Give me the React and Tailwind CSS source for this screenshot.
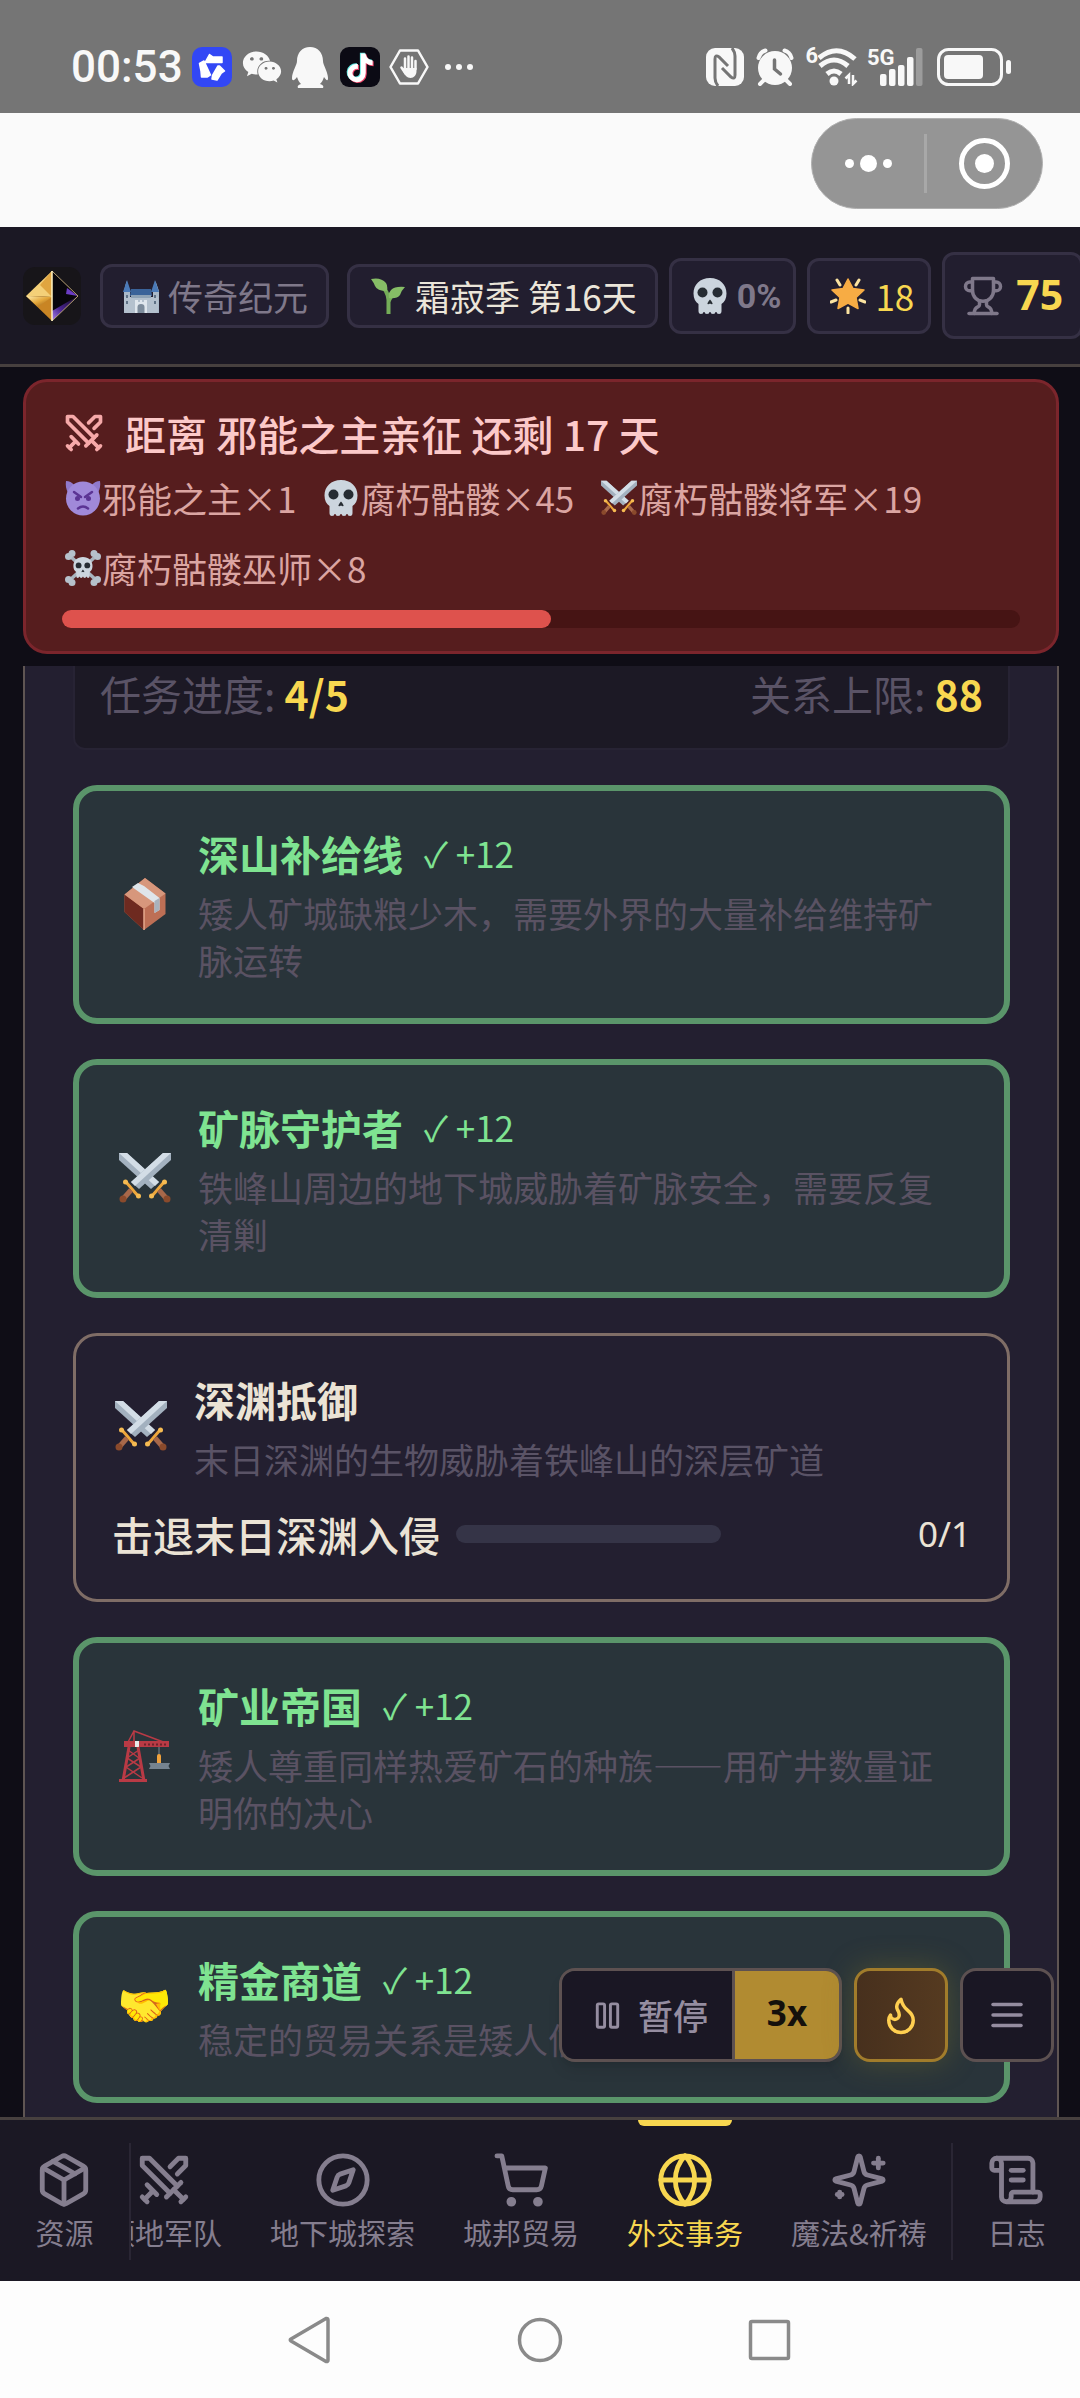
import React from "react";
import { FaWeixin } from "react-icons/fa6";

const PATHS = {
  swords: ["M14.5 17.5 3 6V3h3l11.5 11.5", "M13 19l6-6", "M16 16l4 4", "M19 21l2-2", "M14.5 6.5 18 3h3v3l-3.5 3.5", "M5 14l4 4", "M7 17l-3 3", "M3 19l2 2"],
  box: ["M11 21.73a2 2 0 0 0 2 0l7-4A2 2 0 0 0 21 16V8a2 2 0 0 0-1-1.73l-7-4a2 2 0 0 0-2 0l-7 4A2 2 0 0 0 3 8v8a2 2 0 0 0 1 1.73z", "M12 22V12", "M3.29 7 12 12l8.71-5", "M7.5 4.27l9 5.15"],
  compass: ["M12 2a10 10 0 1 0 0 20a10 10 0 1 0 0-20", "M16.24 7.76l-1.804 5.411a2 2 0 0 1-1.265 1.265L7.76 16.24l1.804-5.411a2 2 0 0 1 1.265-1.265z"],
  cart: ["M8 20a1 1 0 1 0 0 2a1 1 0 1 0 0-2", "M19 20a1 1 0 1 0 0 2a1 1 0 1 0 0-2", "M2.05 2.05h2l2.66 12.42a2 2 0 0 0 2 1.58h9.78a2 2 0 0 0 1.95-1.57l1.65-7.43H5.12"],
  globe: ["M12 2a10 10 0 1 0 0 20a10 10 0 1 0 0-20", "M12 2a14.5 14.5 0 0 0 0 20 14.5 14.5 0 0 0 0-20", "M2 12h20"],
  sparkles: ["M9.937 15.5A2 2 0 0 0 8.5 14.063l-6.135-1.582a.5.5 0 0 1 0-.962L8.5 9.936A2 2 0 0 0 9.937 8.5l1.582-6.135a.5.5 0 0 1 .963 0L14.063 8.5A2 2 0 0 0 15.5 9.937l6.135 1.581a.5.5 0 0 1 0 .964L15.5 14.063a2 2 0 0 0-1.437 1.437l-1.582 6.135a.5.5 0 0 1-.963 0z", "M20 3v4", "M22 5h-4", "M4 17v2", "M5 18H3"],
  scroll: ["M15 12h-5", "M15 8h-5", "M19 17V5a2 2 0 0 0-2-2H4", "M8 21h12a2 2 0 0 0 2-2v-1a1 1 0 0 0-1-1H11a1 1 0 0 0-1 1v1a2 2 0 1 1-4 0V5a2 2 0 1 0-4 0v2a1 1 0 0 0 1 1h3"],
  trophy: ["M6 9H4.5a2.5 2.5 0 0 1 0-5H6", "M18 9h1.5a2.5 2.5 0 0 0 0-5H18", "M4 22h16", "M10 14.66V17c0 .55-.47.98-.97 1.21C7.85 18.75 7 20.24 7 22", "M14 14.66V17c0 .55.47.98.97 1.21C16.15 18.75 17 20.24 17 22", "M18 2H6v7a6 6 0 0 0 12 0V2Z"],
  flame: ["M8.5 14.5A2.5 2.5 0 0 0 11 12c0-1.38-.5-2-1-3-1.072-2.143-.224-4.054 2-6 .5 2.5 2 4.9 4 6.5 2 1.6 3 3.5 3 5.5a7 7 0 1 1-14 0c0-1.153.433-2.294 1-3a2.5 2.5 0 0 0 2.5 2.5z"],
  menu: ["M4 6h16", "M4 12h16", "M4 18h16"],
  pause: ["M6 4h3a1 1 0 0 1 1 1v14a1 1 0 0 1-1 1H6a1 1 0 0 1-1-1V5a1 1 0 0 1 1-1z", "M15 4h3a1 1 0 0 1 1 1v14a1 1 0 0 1-1 1h-3a1 1 0 0 1-1-1V5a1 1 0 0 1 1-1z"],
};

function Icon({ name, className }) {
  return (
    <svg viewBox="0 0 24 24" fill="none" stroke="currentColor" strokeWidth="2" strokeLinecap="round" strokeLinejoin="round" className={`shrink-0 ${className}`} aria-hidden="true">
      {PATHS[name].map((d) => (
        <path key={d} d={d} />
      ))}
    </svg>
  );
}

function SkullShape() {
  return (
    <>
      <path d="M18 0C8 0 1.500 6.500 1.500 15.500c0 5 2 8.500 5 10.500V33q0 3 2.500 3t2.500-2h1q0 2 2.500 2t2.500-2h1q0 2 2.500 2t2.500-2h1q0 2 2.500 2t2.500-3v-7c3-2 5-5.500 5-10.500C34.500 6.500 28 0 18 0z" fill="#ccd5de" />
      <circle cx="10.500" cy="14.500" r="5" fill="#262c33" />
      <circle cx="25.500" cy="14.500" r="5" fill="#262c33" />
      <path d="M18 21.500q-3 3.500-2.500 4.500 1 .5 2.500-.5 1.500 1 2.500.5.500-1-2.500-4.500z" fill="#262c33" />
    </>
  );
}

function BladeShape() {
  return (
    <>
      <path d="M0 1h8l32 29-8 7L0 8z" fill="#a3b1bf" />
      <path d="M0 1h8l32 29-4 4z" fill="#d3dde6" />
      <path d="M33 44l12-14" stroke="#eda63c" strokeWidth="3" strokeLinecap="round" />
      <path d="M40 38l7 8" stroke="#a8684a" strokeWidth="5" />
      <circle cx="48" cy="47" r="3.500" fill="#8a4a2c" />
      <circle cx="32.500" cy="44" r="2.500" fill="#f6bb52" />
      <circle cx="45.500" cy="30" r="2.500" fill="#f6bb52" />
    </>
  );
}

const EMOJI = {
  swords: (
    <svg viewBox="0 0 52 52" aria-hidden="true">
      <BladeShape />
      <g transform="matrix(-1 0 0 1 52 0)"><BladeShape /></g>
    </svg>
  ),
  skull: <svg viewBox="0 0 36 36" aria-hidden="true"><SkullShape /></svg>,
  crossbones: (
    <svg viewBox="0 0 36 36" aria-hidden="true">
      <path d="M5 6l26 24M31 6L5 30" stroke="#a9b4be" strokeWidth="3.500" />
      <g fill="#b6c1cb">
        <circle cx="3.500" cy="6.500" r="3.500" /><circle cx="7" cy="3.500" r="3.500" />
        <circle cx="32.500" cy="6.500" r="3.500" /><circle cx="29" cy="3.500" r="3.500" />
        <circle cx="3.500" cy="29.500" r="3.500" /><circle cx="7" cy="32.500" r="3.500" />
        <circle cx="32.500" cy="29.500" r="3.500" /><circle cx="29" cy="32.500" r="3.500" />
      </g>
      <g transform="translate(7.500 7) scale(.58)"><SkullShape /></g>
    </svg>
  ),
  imp: (
    <svg viewBox="0 0 36 36" aria-hidden="true">
      <path d="M1 1q5 0 8 4l-6 8Q0 7 1 1zM35 1q-5 0-8 4l6 8q3-6 2-12z" fill="#9079cb" />
      <circle cx="18" cy="18.500" r="17" fill="#a089d9" />
      <path d="M9 12l7 5M27 12l-7 5" stroke="#5b3494" strokeWidth="2.500" strokeLinecap="round" />
      <circle cx="12.500" cy="18.500" r="2.500" fill="#5b3494" />
      <circle cx="23.500" cy="18.500" r="2.500" fill="#5b3494" />
      <path d="M13 28.500q5-4 10 0" fill="none" stroke="#5b3494" strokeWidth="2.500" strokeLinecap="round" />
    </svg>
  ),
  castle: (
    <svg viewBox="0 0 36 36" aria-hidden="true">
      <path d="M3.500 3L7 13v22H1V13zM32.500 3l3.500 10v22h-6V13z" fill="#a9b9c9" />
      <path d="M1 33V19h34v14q0 2-2 2H3q-2 0-2-2z" fill="#b4c1ce" />
      <path d="M4 2l4 12H0zM32 2l4 12h-8z" fill="#4a7ab8" />
      <path d="M8 11h20l1 7H7z" fill="#3a6399" />
      <path d="M8 17h20v3H8z" fill="#8fa3b6" />
      <path d="M12 22h3v2h2v-2h2v2h2v-2h3v13H12z" fill="#dfe6ed" />
      <path d="M14.500 35v-6q0-3 3.500-3t3.500 3v6z" fill="#7d8c9c" />
      <path d="M3 17h2v3H3zM31 17h2v3h-2zM3 23h2v3H3zM31 23h2v3h-2z" fill="#5f7286" />
    </svg>
  ),
  sprout: (
    <svg viewBox="0 0 36 36" aria-hidden="true">
      <path d="M18.500 36V22Q18 13 10 6M18.500 24Q20 18 27 14" fill="none" stroke="#74ad58" strokeWidth="4" />
      <path d="M1 1q10-2 15 4 2 3 1 8-10 0-12-5Q4 5 1 1zM35 9q-10-1-14 3-3 3-2 8 8 1 11-3 1-4 5-8z" fill="#86bd66" />
    </svg>
  ),
  star: (
    <svg viewBox="0 0 36 36" aria-hidden="true">
      <path d="M7 2l3 5M29 2l-3 5M1 24l5-2M35 24l-5-2M18 30v5" stroke="#fbe3a0" strokeWidth="3" strokeLinecap="round" />
      <path d="M18 1l5 9.500 11 1.500-8 7.500 2 11-10-5.500L8 30.500l2-11L2 12l11-1.500z" fill="#f7ac44" stroke="#f7ac44" strokeWidth="1.500" strokeLinejoin="round" />
    </svg>
  ),
  box: (
    <svg viewBox="0 0 52 52" aria-hidden="true">
      <path d="M26 0l20.500 15.500V36L25 52 5.500 34V16.500z" fill="#bd6f55" />
      <path d="M5.500 16.500L25 31v21L5.500 34z" fill="#6e2a20" />
      <path d="M26 0l20.500 15.500L25 31 5.500 16.500z" fill="#d7977c" />
      <path d="M19 5l6 3 15.500 12v12l-5 3V25L13 9z" fill="#dfe5ea" />
      <path d="M35.500 23l5-3v12l-5 3z" fill="#a9b2bd" />
      <path d="M25 31v21" stroke="#e6a88c" strokeWidth="1.500" />
    </svg>
  ),
  crane: (
    <svg viewBox="0 0 52 52" aria-hidden="true" fill="none" stroke="#b93a45">
      <path d="M8 14L15 1l32 12M15 1v14" strokeWidth="1.500" />
      <path d="M5 14h45" strokeWidth="6" />
      <path d="M25 14.500h24" stroke="#6d222b" strokeWidth="2" strokeDasharray="2 2" />
      <path d="M16 11h4v6h-4z" fill="#e8e8ea" stroke="none" />
      <path d="M10 17L4 51M19 17l6 34" strokeWidth="3" />
      <path d="M9 20l11 8M20 20L8 28l14 9M21 28L7 37l16 11M22 37L5 48" strokeWidth="1.500" />
      <path d="M0 50.500h28" strokeWidth="3" />
      <path d="M40 17v10" stroke="#7f8a94" strokeWidth="1" />
      <path d="M40 26v7" stroke="#f0a23c" strokeWidth="4" strokeLinecap="round" />
      <path d="M30 33h21l-1.500 3 1.500 3H30l1.500-3z" fill="#75838f" stroke="none" />
    </svg>
  ),
};

function SmallEmoji({ name }) {
  return <span className="w-[36px] shrink-0 self-center">{EMOJI[name]}</span>;
}

function CardEmoji({ name }) {
  return (
    <span className="flex w-[57px] shrink-0 justify-center">
      {name === "handshake" ? (
        <span className="font-['Noto_Color_Emoji'] text-[44px] leading-[58px] brightness-115" aria-hidden="true">🤝</span>
      ) : (
        <span className="w-[52px]">{EMOJI[name]}</span>
      )}
    </span>
  );
}

const NOTE = "M448,209.91a210.06,210.06,0,0,1-122.77-39.25V349.38A162.55,162.55,0,1,1,185,188.31V278.2a74.62,74.62,0,1,0,52.23,71.18V0l88,0a121.18,121.18,0,0,0,1.86,22.17h0A122.18,122.18,0,0,0,381,102.39a121.43,121.43,0,0,0,67,20.14Z";

function StatusBar() {
  return (
    <div className="flex h-[113px] shrink-0 items-end justify-between bg-[#757575] pr-[69px] pb-[24px] pl-[71px] text-[#f8f8f8]">
      <div className="flex h-[44px] items-center">
        <span className="w-[121px] font-['Roboto'] text-[44px] leading-[44px] font-medium">00:53</span>
        <svg viewBox="0 0 40 40" className="mr-[10px] size-[40px]">
          <rect width="40" height="40" rx="10" fill="#3247f5" />
          <path d="M13 15.500L17.500 7.500 21 10h9v5.500zM7.500 16.500L12 14l6.500 14-3 2h-6l-.5-6zM27.500 19l5 5-3.500 2.500-4 6.500-5-1 .5-3.500L26 19z" fill="#fff" stroke="#fff" strokeWidth="1.500" strokeLinejoin="round" />
        </svg>
        <FaWeixin className="mr-[10px] size-[40px]" />
        <svg viewBox="0 0 36 41" className="mr-[12px] h-[41px] w-[36px]" fill="currentColor">
          <path d="M18 0C10 0 5 6 5 14c0 4-5 11-5 17 0 4 3 2 5-1 1 3 2 5 4 7-3 1-4 2-3 4h25c1-2 0-3-3-4 2-2 3-4 4-7 2 3 4 5 4 1 0-6-5-13-5-17 0-8-5-14-13-14z" />
        </svg>
        <svg viewBox="0 0 40 40" className="mr-[9px] size-[40px]">
          <rect width="40" height="40" rx="9" fill="#0b0a14" />
          <g transform="translate(7.5 6.5) scale(.056)">
            <path d={NOTE} fill="#5fe9e4" transform="translate(-16 -14)" />
            <path d={NOTE} fill="#f3476c" transform="translate(18 16)" />
            <path d={NOTE} fill="#fff" />
          </g>
        </svg>
        <svg viewBox="0 0 40 36" className="mr-[16px] h-[36px] w-[40px]" fill="none" stroke="currentColor" strokeLinejoin="round" strokeLinecap="round">
          <path d="M11 1.500h18L38.500 18 29 34.500H11L1.500 18z" strokeWidth="2.500" />
          <path d="M16 20V9.500M19.500 19V7.500M23 19V8.500M26.500 20V12M12.500 18.500l4 6" strokeWidth="2.500" />
          <path d="M15 19h12.500v3c0 4-2.500 7-6 7s-6-3-8-8z" fill="currentColor" stroke="none" />
        </svg>
        <svg viewBox="0 0 28 6" className="h-[6px] w-[28px]" fill="currentColor">
          <circle cx="3" cy="3" r="3" /><circle cx="14" cy="3" r="3" /><circle cx="25" cy="3" r="3" />
        </svg>
      </div>
      <div className="flex h-[44px] items-center">
        <svg viewBox="0 0 38 38" className="mr-[12px] size-[38px]">
          <rect width="38" height="38" rx="9" fill="currentColor" />
          <path d="M12 38Q9 34 9 30V11Q9 6 13 9L22 18M26 0Q29 4 29 8V27Q29 32 25 29L16 20" fill="none" stroke="#757575" strokeWidth="3" />
        </svg>
        <svg viewBox="0 0 38 38" className="mr-[11px] size-[38px]" fill="none" stroke="currentColor" strokeLinecap="round">
          <circle cx="19" cy="20" r="17" fill="currentColor" stroke="none" />
          <path d="M2.500 10Q4 4 9.500 2.500M35.500 10Q34 4 28.500 2.500M8 32l-4 4M30 32l4 4" strokeWidth="4" />
          <path d="M18.500 12v9l6 5" stroke="#757575" strokeWidth="3.500" />
        </svg>
        <span className="h-[42px] font-['Roboto'] text-[22px] leading-[20px] font-bold">6</span>
        <svg viewBox="0 0 40 38" className="mr-[9px] h-[38px] w-[40px]" fill="none" stroke="currentColor" strokeWidth="5">
          <path d="M1 10Q19-5 37 11M2 18Q16 6 30 18M9 26Q16 20 23 26" />
          <circle cx="16" cy="33" r="4.500" fill="currentColor" stroke="none" />
          <path d="M31 36V27l-3.500 3.500M35 27v9l3.500-3.500" strokeWidth="2.500" />
        </svg>
        <div className="relative mr-[14px] h-[38px] w-[56px]">
          <span className="absolute top-0 left-0 font-['Roboto'] text-[22px] leading-[20px] font-bold">5G</span>
          <svg viewBox="0 0 56 38" className="size-full" fill="currentColor">
            <rect x="13" y="26" width="6.500" height="12" rx="2" />
            <rect x="22" y="21" width="6.500" height="17" rx="2" />
            <rect x="31" y="17" width="6.500" height="21" rx="2" />
            <rect x="40" y="9" width="6.500" height="29" rx="2" />
            <rect x="49" y="0" width="6.500" height="38" rx="2" opacity=".3" />
          </svg>
        </div>
        <svg viewBox="0 0 74 38" className="h-[38px] w-[74px]">
          <rect x="1.500" y="1.500" width="63" height="35" rx="10" fill="none" stroke="currentColor" strokeWidth="3" />
          <rect x="7" y="7" width="39" height="24" rx="4" fill="currentColor" />
          <rect x="69" y="12" width="5" height="14" rx="2.500" fill="currentColor" />
        </svg>
      </div>
    </div>
  );
}

function MiniAppBar() {
  return (
    <div className="flex h-[114px] shrink-0 items-start justify-end bg-[#fafafa] pt-[5px] pr-[37px]">
      <div className="flex h-[91px] w-[232px] items-center rounded-full border border-[#b0b0b0] bg-[#959595]">
        <button aria-label="更多" className="flex h-full w-[112px] items-center justify-center gap-[6px]">
          <span className="size-[9px] rounded-full bg-white" />
          <span className="size-[17px] rounded-full bg-white" />
          <span className="size-[9px] rounded-full bg-white" />
        </button>
        <span className="h-[59px] w-[3px] bg-[#a8a8a8]" />
        <button aria-label="关闭" className="flex h-full flex-1 items-center justify-center">
          <span className="flex size-[51px] items-center justify-center rounded-full border-[5px] border-white">
            <span className="size-[19px] rounded-full bg-white" />
          </span>
        </button>
      </div>
    </div>
  );
}

function Header() {
  return (
    <header className="flex h-[140px] shrink-0 items-center overflow-hidden border-b-[3px] border-[#47403f] bg-[#1b1824] pl-[23px] text-[35px] leading-[58px] whitespace-nowrap">
      <svg viewBox="0 0 58 58" className="mr-[19px] size-[58px] shrink-0">
        <defs>
          <linearGradient id="gold" x1="0" y1="0" x2="1" y2="1"><stop offset="0" stopColor="#fff0b0" /><stop offset=".5" stopColor="#e3a63a" /><stop offset="1" stopColor="#8a4f10" /></linearGradient>
          <linearGradient id="violet" x1="0" y1="1" x2="1" y2="0"><stop offset="0" stopColor="#a984f0" /><stop offset=".4" stopColor="#4a2490" /><stop offset="1" stopColor="#0c0716" /></linearGradient>
        </defs>
        <rect width="58" height="58" rx="12" fill="#171519" />
        <path d="M29 4L3 29l26 1z" fill="#f4d078" />
        <path d="M29 4L17 18l12 12z" fill="#e0a540" />
        <path d="M3 29l26 1v24z" fill="#c98524" />
        <path d="M3 29l26 1-14 10z" fill="url(#gold)" />
        <path d="M29 4l26 25-26 25z" fill="#08060c" />
        <path d="M44 21l11 8-12-2z" fill="#6b3cc4" />
        <path d="M29 54V44l12-7 14-8z" fill="url(#violet)" />
        <path d="M29 4l26 25-26 25" fill="none" stroke="#b9a173" strokeWidth="1" />
        <path d="M29 4v50" stroke="#fff3c4" strokeWidth="1.500" />
      </svg>
      <div className="mr-[18px] flex shrink-0 gap-[9px] rounded-xl border-[3px] border-[#353044] bg-[#221e2f] pr-[18px] pl-[20px] text-[#7f788a]">
        <SmallEmoji name="castle" /><span>传奇纪元</span>
      </div>
      <div className="mr-[11px] flex shrink-0 gap-[9px] rounded-xl border-[3px] border-[#353044] bg-[#221e2f] pr-[18px] pl-[20px] text-[#ebe5d9]">
        <SmallEmoji name="sprout" /><span>霜寂季 第16天</span>
      </div>
      <div className="mr-[11px] flex shrink-0 gap-[9px] rounded-xl border-[3px] border-[#353044] bg-[#221e2f] py-[6px] pr-[12px] pl-[20px] text-[#7f788a]">
        <SmallEmoji name="skull" /><span className="font-['Roboto'] text-[34px] font-bold">0%</span>
      </div>
      <div className="mr-[11px] flex shrink-0 gap-[9px] rounded-xl border-[3px] border-[#353044] bg-[#221e2f] py-[6px] pr-[14px] pl-[20px] text-[#f8d750]">
        <SmallEmoji name="star" /><span>18</span>
      </div>
      <div className="flex h-[87px] shrink-0 items-center gap-[12px] rounded-xl border-[3px] border-[#353044] bg-[#221e2f] px-[17px]">
        <Icon name="trophy" className="size-[42px] text-[#7f788a]" />
        <span className="pb-[4px] font-['Noto_Sans'] text-[41px] font-bold text-[#f8d750]">75</span>
      </div>
    </header>
  );
}

const ENEMIES = [
  ["imp", "邪能之主×1"],
  ["skull", "腐朽骷髅×45"],
  ["swords", "腐朽骷髅将军×19"],
  ["crossbones", "腐朽骷髅巫师×8"],
];

function Alert() {
  return (
    <section className="mt-[12px] mr-[21px] mb-[12px] ml-[23px] shrink-0 rounded-3xl border-[3px] border-[#7b252c] bg-[#561d1e] px-[36px] pt-[22px] pb-[23px]">
      <h2 className="mb-[1px] flex items-center gap-[19px] text-[41px] leading-[58px] font-medium text-[#fcc9c9]">
        <Icon name="swords" className="size-[44px] text-[#f6a9a9]" />
        距离 邪能之主亲征 还剩 17 天
      </h2>
      <ul className="mb-[7px] flex flex-wrap gap-x-[24px] text-[35px] leading-[70px] text-[#dba5a2]">
        {ENEMIES.map(([e, t]) => (
          <li key={t} className="flex gap-[1px] pl-[3px]"><SmallEmoji name={e} /><span>{t}</span></li>
        ))}
      </ul>
      <div className="h-[18px] rounded-full bg-[#461414]" role="progressbar" aria-label="入侵倒计时" aria-valuenow="51" aria-valuemin="0" aria-valuemax="100">
        <div className="h-full w-[51%] rounded-full bg-[#de524d]" />
      </div>
    </section>
  );
}

function DoneCard({ emoji, title, text }) {
  return (
    <article className="flex items-center gap-[25px] rounded-3xl border-[6px] border-[#5a956a] bg-[#29343a] px-[37px] pt-[33px] pb-[35px]">
      <CardEmoji name={emoji} />
      <div className="flex flex-1 flex-col gap-[7px]">
        <h3 className="flex gap-[21px] text-[41px] leading-[58px] font-bold text-[#7fe391]">
          {title}
          <span className="text-[35px] font-normal">✓ +12</span>
        </h3>
        <p className="text-[35px] leading-[47px] text-[#5a5263]">{text}</p>
      </div>
    </article>
  );
}

function ActiveCard() {
  return (
    <article className="flex flex-col gap-[23px] rounded-3xl border-[3px] border-[#7f6d66] px-[36px] pt-[34px] pb-[36px]">
      <div className="flex items-center gap-[25px]">
        <CardEmoji name="swords" />
        <div className="flex flex-1 flex-col gap-[7px]">
          <h3 className="text-[41px] leading-[58px] font-bold text-[#ebe3d5]">深渊抵御</h3>
          <p className="text-[35px] leading-[47px] text-[#5a5366]">末日深渊的生物威胁着铁峰山的深层矿道</p>
        </div>
      </div>
      <div className="flex items-center gap-[16px] text-[41px] leading-[58px] font-medium text-[#ebe3d5]">
        击退末日深渊入侵
        <div className="h-[18px] flex-1 rounded-full bg-[#353447]" role="progressbar" aria-label="击退末日深渊入侵" aria-valuenow="0" aria-valuemin="0" aria-valuemax="1" />
        <span className="w-[234px] text-right font-['Noto_Sans'] text-[35px] font-normal">0/1</span>
      </div>
    </article>
  );
}

function Controls() {
  return (
    <div className="absolute right-[26px] bottom-[55px] flex gap-[12px] text-[35px]">
      <div className="flex h-[94px] overflow-hidden rounded-2xl border-[3px] border-[#5d5151] shadow-lg">
        <button className="flex items-center gap-[13px] border-r-[3px] border-[#5d5151] bg-[#1a1724] pr-[24px] pl-[28px] font-medium text-[#958da0]">
          <Icon name="pause" className="size-[35px]" />
          暂停
        </button>
        <button className="w-[104px] bg-[#b18b31] pb-[3px] font-['Noto_Sans'] font-bold text-[#14100c]">3x</button>
      </div>
      <button aria-label="火焰" className="flex size-[94px] items-center justify-center rounded-2xl border-[3px] border-[#a17c2b] bg-linear-to-r from-[#47301d] to-[#553a20] text-[#ffcf50] shadow-[0_0_30px_rgba(120,110,40,0.45)]">
        <Icon name="flame" className="size-[42px]" />
      </button>
      <button aria-label="菜单" className="flex size-[94px] items-center justify-center rounded-2xl border-[3px] border-[#5d5151] bg-[#1a1724] text-[#958da0]">
        <Icon name="menu" className="size-[42px]" />
      </button>
    </div>
  );
}

const TABS = [
  ["swords", "领地军队"],
  ["compass", "地下城探索"],
  ["cart", "城邦贸易"],
  ["globe", "外交事务"],
  ["sparkles", "魔法&祈祷"],
];

function Tab({ icon, label, active }) {
  return (
    <button className={`relative flex shrink-0 flex-col items-center gap-[4px] px-[24px] pt-[31px] whitespace-nowrap ${active ? "text-[#f8d750]" : "text-[#857e8f]"}`}>
      {active && <span className="absolute top-0 h-[6px] w-[94px] rounded-b-md bg-[#f8d750]" />}
      <Icon name={icon} className="size-[58px]" />
      <span className="text-[29px] leading-[38px]">{label}</span>
    </button>
  );
}

function TabBar() {
  return (
    <nav className="flex h-[164px] shrink-0 border-t-[3px] border-[#47403f] bg-[#1b1824]">
      <div className="flex w-[129px] shrink-0 justify-center"><Tab icon="box" label="资源" /></div>
      <span className="mt-[23px] h-[117px] w-[2px] shrink-0 bg-[#2a2634]" />
      <div className="flex flex-1 overflow-hidden">
        <div className="-ml-[49px] flex">
          {TABS.map(([i, l]) => (
            <Tab key={l} icon={i} label={l} active={i === "globe"} />
          ))}
        </div>
      </div>
      <span className="mt-[23px] h-[117px] w-[2px] shrink-0 bg-[#2a2634]" />
      <div className="flex w-[127px] shrink-0 justify-center"><Tab icon="scroll" label="日志" /></div>
    </nav>
  );
}

function SystemNav() {
  return (
    <div className="flex h-[117px] shrink-0 items-center justify-center gap-[182px] bg-[#fdfdfd] text-[#8a8a8a]">
      {[
        ["返回", "M5 23L40 2.500Q42 2 42 4V44Q42 46 40 45.500L5 25Q3.500 24 5 23z"],
        ["主页", "M24 3.500a20.500 20.500 0 1 0 0 41a20.500 20.500 0 1 0 0-41"],
        ["最近任务", "M6 5.500h35q1.500 0 1.500 1.500v34q0 1.500-1.500 1.500H6q-1.500 0-1.500-1.500V7q0-1.500 1.500-1.500z"],
      ].map(([label, d]) => (
        <button key={label} aria-label={label} className="size-[48px]">
          <svg viewBox="0 0 48 48" fill="none" stroke="currentColor" strokeWidth="3.500" strokeLinejoin="round"><path d={d} /></svg>
        </button>
      ))}
    </div>
  );
}

export default function App() {
  return (
    <div lang="zh-CN" className="flex h-screen flex-col overflow-hidden bg-[#0f0d16] font-['Noto_Sans_CJK_SC',sans-serif]">
      <StatusBar />
      <MiniAppBar />
      <Header />
      <Alert />
      <main className="relative min-h-0 flex-1">
        <div className="mr-[21px] ml-[23px] flex h-full flex-col gap-[35px] overflow-hidden border-x-[2px] border-[#5f5553] bg-[#231f30] pr-[47px] pl-[48px]">
          <div className="flex justify-between rounded-b-xl border-x-[2px] border-b-[2px] border-[#272334] bg-[#1c1925] px-[25px] pb-[28px] text-[41px] leading-[54px] text-[#5a5366]">
            <span>任务进度: <b className="text-[#f8d750]">4/5</b></span>
            <span>关系上限: <b className="text-[#f8d750]">88</b></span>
          </div>
          <DoneCard emoji="box" title="深山补给线" text="矮人矿城缺粮少木，需要外界的大量补给维持矿脉运转" />
          <DoneCard emoji="swords" title="矿脉守护者" text="铁峰山周边的地下城威胁着矿脉安全，需要反复清剿" />
          <ActiveCard />
          <DoneCard emoji="crane" title="矿业帝国" text="矮人尊重同样热爱矿石的种族——用矿井数量证明你的决心" />
          <DoneCard emoji="handshake" title="精金商道" text="稳定的贸易关系是矮人信任的基石" />
        </div>
        <Controls />
      </main>
      <TabBar />
      <SystemNav />
    </div>
  );
}
